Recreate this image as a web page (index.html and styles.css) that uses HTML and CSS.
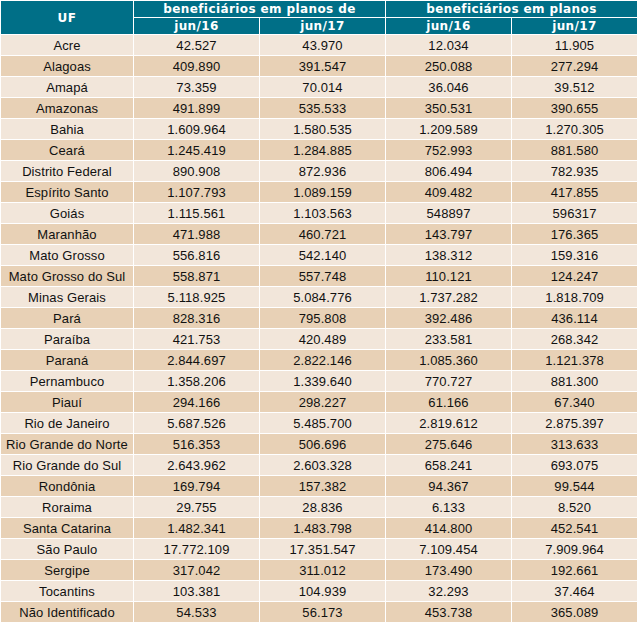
FILE: index.html
```html
<!DOCTYPE html>
<html lang="pt">
<head>
<meta charset="utf-8">
<link rel="stylesheet" href="styles.css">
</head>
<body>
<table class="tbl">
  <colgroup>
    <col class="c-uf"><col class="c-num"><col class="c-num"><col class="c-num"><col class="c-num">
  </colgroup>
  <thead>
    <tr class="h1">
      <th rowspan="2" class="uf">UF</th>
      <th colspan="2">beneficiários em planos de</th>
      <th colspan="2">beneficiários em planos</th>
    </tr>
    <tr class="h2">
      <th>jun/16</th><th>jun/17</th><th>jun/16</th><th>jun/17</th>
    </tr>
  </thead>
  <tbody>
    <tr class="odd"><td>Acre</td><td>42.527</td><td>43.970</td><td>12.034</td><td>11.905</td></tr>
    <tr class="even"><td>Alagoas</td><td>409.890</td><td>391.547</td><td>250.088</td><td>277.294</td></tr>
    <tr class="odd"><td>Amapá</td><td>73.359</td><td>70.014</td><td>36.046</td><td>39.512</td></tr>
    <tr class="even"><td>Amazonas</td><td>491.899</td><td>535.533</td><td>350.531</td><td>390.655</td></tr>
    <tr class="odd"><td>Bahia</td><td>1.609.964</td><td>1.580.535</td><td>1.209.589</td><td>1.270.305</td></tr>
    <tr class="even"><td>Ceará</td><td>1.245.419</td><td>1.284.885</td><td>752.993</td><td>881.580</td></tr>
    <tr class="odd"><td>Distrito Federal</td><td>890.908</td><td>872.936</td><td>806.494</td><td>782.935</td></tr>
    <tr class="even"><td>Espírito Santo</td><td>1.107.793</td><td>1.089.159</td><td>409.482</td><td>417.855</td></tr>
    <tr class="odd"><td>Goiás</td><td>1.115.561</td><td>1.103.563</td><td>548897</td><td>596317</td></tr>
    <tr class="even"><td>Maranhão</td><td>471.988</td><td>460.721</td><td>143.797</td><td>176.365</td></tr>
    <tr class="odd"><td>Mato Grosso</td><td>556.816</td><td>542.140</td><td>138.312</td><td>159.316</td></tr>
    <tr class="even"><td>Mato Grosso do Sul</td><td>558.871</td><td>557.748</td><td>110.121</td><td>124.247</td></tr>
    <tr class="odd"><td>Minas Gerais</td><td>5.118.925</td><td>5.084.776</td><td>1.737.282</td><td>1.818.709</td></tr>
    <tr class="even"><td>Pará</td><td>828.316</td><td>795.808</td><td>392.486</td><td>436.114</td></tr>
    <tr class="odd"><td>Paraíba</td><td>421.753</td><td>420.489</td><td>233.581</td><td>268.342</td></tr>
    <tr class="even"><td>Paraná</td><td>2.844.697</td><td>2.822.146</td><td>1.085.360</td><td>1.121.378</td></tr>
    <tr class="odd"><td>Pernambuco</td><td>1.358.206</td><td>1.339.640</td><td>770.727</td><td>881.300</td></tr>
    <tr class="even"><td>Piauí</td><td>294.166</td><td>298.227</td><td>61.166</td><td>67.340</td></tr>
    <tr class="odd"><td>Rio de Janeiro</td><td>5.687.526</td><td>5.485.700</td><td>2.819.612</td><td>2.875.397</td></tr>
    <tr class="even"><td>Rio Grande do Norte</td><td>516.353</td><td>506.696</td><td>275.646</td><td>313.633</td></tr>
    <tr class="odd"><td>Rio Grande do Sul</td><td>2.643.962</td><td>2.603.328</td><td>658.241</td><td>693.075</td></tr>
    <tr class="even"><td>Rondônia</td><td>169.794</td><td>157.382</td><td>94.367</td><td>99.544</td></tr>
    <tr class="odd"><td>Roraima</td><td>29.755</td><td>28.836</td><td>6.133</td><td>8.520</td></tr>
    <tr class="even"><td>Santa Catarina</td><td>1.482.341</td><td>1.483.798</td><td>414.800</td><td>452.541</td></tr>
    <tr class="odd"><td>São Paulo</td><td>17.772.109</td><td>17.351.547</td><td>7.109.454</td><td>7.909.964</td></tr>
    <tr class="even"><td>Sergipe</td><td>317.042</td><td>311.012</td><td>173.490</td><td>192.661</td></tr>
    <tr class="odd"><td>Tocantins</td><td>103.381</td><td>104.939</td><td>32.293</td><td>37.464</td></tr>
    <tr class="even"><td>Não Identificado</td><td>54.533</td><td>56.173</td><td>453.738</td><td>365.089</td></tr>
  </tbody>
</table>
</body>
</html>
```

FILE: styles.css
```css
html, body {
  margin: 0;
  padding: 0;
  background: #ffffff;
}

.tbl {
  border-collapse: separate;
  border-spacing: 1px;
  width: 638px;
  table-layout: fixed;
  font-family: "Liberation Sans", Arial, sans-serif;
  font-size: 13px;
  letter-spacing: 0.1px;
  color: #111111;
}

.c-uf { width: 132px; }
.c-num { width: 125px; }

.tbl th {
  background: #006f87;
  color: #ffffff;
  font-family: "DejaVu Sans", Verdana, sans-serif;
  font-weight: bold;
  font-size: 12px;
  height: 16px;
  padding: 0;
  line-height: 16px;
  text-align: center;
  letter-spacing: 0.4px;
}

.tbl th.uf {
  font-size: 12px;
  letter-spacing: 0.5px;
}

.tbl td {
  height: 19px;
  padding: 1px 0 0;
  line-height: 19px;
  text-align: center;
  white-space: nowrap;
}

.odd td { background: #f2e6da; }
.even td { background: #e8d1b6; }
```
